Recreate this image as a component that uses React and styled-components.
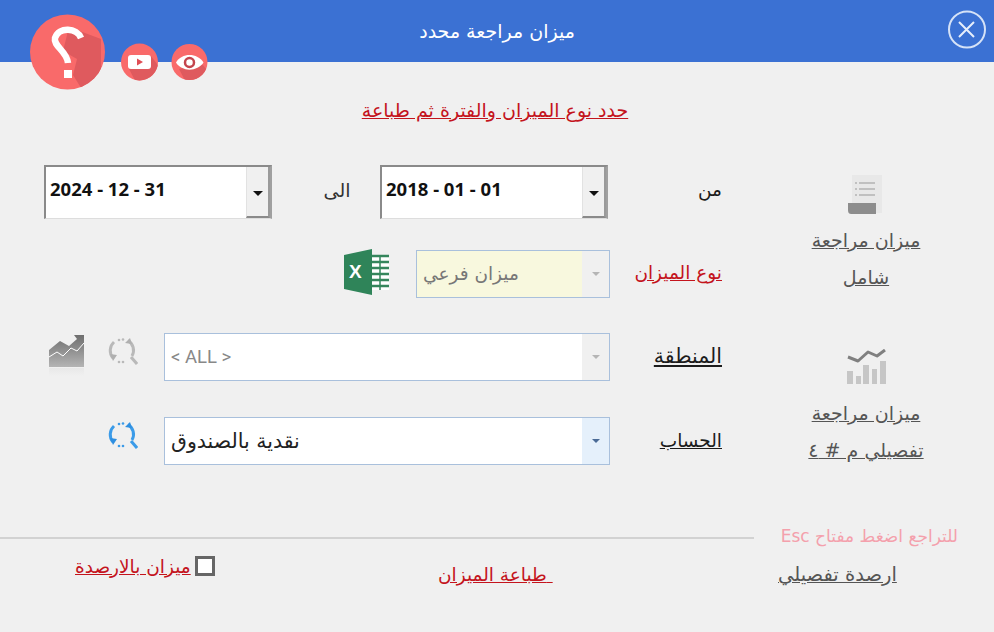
import React from "react";
import styled, { createGlobalStyle } from "styled-components";

const Global = createGlobalStyle`
  html, body { margin: 0; padding: 0; background: #f0f0f0; }
  body { font-family: "DejaVu Sans", "Noto Sans", sans-serif; }
  * { box-sizing: border-box; }
`;

const Page = styled.div`
  position: relative;
  width: 994px;
  height: 632px;
  overflow: hidden;
  background: #f0f0f0;
`;
const Header = styled.header`
  height: 62px;
  background: #3b71d3;
  display: flex;
  align-items: center;
  justify-content: center;
  color: #fff;
  font-size: 19px;
`;
const CloseButton = styled.svg`
  position: absolute;
  left: 947px;
  top: 10px;
`;
const Badges = styled.div`
  position: absolute;
  left: 29px;
  top: 13px;
`;
const Hint = styled.div`
  margin-top: 36px;
  height: 24px;
  line-height: 24px;
  text-align: center;
  color: #c4141d;
  font-size: 19px;
  text-decoration: underline;
  padding-right: 4px;
`;
const Content = styled.main`
  margin-top: 43px;
  display: flex;
  height: 300px;
`;
const Form = styled.div`
  width: 754px;
  display: flex;
  flex-direction: column;
`;
const Row = styled.div`
  display: flex;
  align-items: center;
  width: 722px;
  height: ${(p) => p.$h}px;
  margin-top: ${(p) => p.$top}px;
  padding-left: ${(p) => p.$left}px;
`;
const RowLabel = styled.div`
  margin-left: auto;
  margin-top: ${(p) => (p.$plain ? -6 : -2)}px;
  font-size: ${(p) => p.$size || 18.5}px;
  color: ${(p) => (p.$red ? "#c4141d" : "#1c1c1c")};
  text-decoration: ${(p) => (p.$plain ? "none" : "underline")};
`;
const DatePicker = styled.div`
  width: 228px;
  height: 54px;
  display: flex;
  background: #fff;
  border: 2px solid #8a8a8a;
  border-right-color: #a0a0a0;
  border-bottom: 1px solid #ddd;
  box-shadow: inset 0 0 0 1px #fff;
`;
const DateValue = styled.div`
  flex: 1;
  padding: 10px 0 0 4px;
  font-family: "Noto Sans", sans-serif;
  font-weight: 700;
  font-size: 18.5px;
  line-height: 24px;
  color: #111;
`;
const DateArrow = styled.div`
  width: 24px;
  background: #f0f0f0;
  border-left: 1px solid #e2e2e2;
  border-right: 2px solid #9a9a9a;
  border-bottom: 2px solid #8a8a8a;
  display: flex;
  align-items: center;
  justify-content: center;
  &::after {
    content: "";
    margin-top: 4px;
    border-left: 5px solid transparent;
    border-right: 5px solid transparent;
    border-top: 5px solid #111;
  }
`;
const RangeWord = styled.div`
  width: 108px;
  padding-left: 22px;
  margin-top: -4px;
  text-align: center;
  font-size: 19px;
  color: #333;
`;
const Select = styled.div`
  width: ${(p) => p.$w}px;
  height: 48px;
  display: flex;
  background: ${(p) => p.$bg || "#fff"};
  border: 1.5px solid #a9c0dc;
`;
const SelectValue = styled.div`
  flex: 1;
  padding-left: 6px;
  display: flex;
  align-items: center;
  direction: ${(p) => (p.$ltr ? "ltr" : "rtl")};
  justify-content: ${(p) => (p.$ltr ? "flex-start" : "flex-end")};
  font-size: ${(p) => p.$size}px;
  font-family: ${(p) => (p.$ltr ? '"Roboto", sans-serif' : "inherit")};
  color: ${(p) => p.$color};
`;
const SelectArrow = styled.div`
  width: 27px;
  background: ${(p) => (p.$active ? "#e5f0fb" : "#f0f0f0")};
  display: flex;
  align-items: center;
  justify-content: center;
  &::after {
    content: "";
    border-left: 4px solid transparent;
    border-right: 4px solid transparent;
    border-top: 4px solid ${(p) => (p.$active ? "#4a6a96" : "#b5b5b5")};
  }
`;
const Gap = styled.div`
  width: ${(p) => p.$w}px;
  flex: none;
`;
const Sidebar = styled.nav`
  width: 224px;
  padding-top: 10px;
  display: flex;
  flex-direction: column;
  align-items: center;
`;
const SideItem = styled.a`
  display: flex;
  flex-direction: column;
  align-items: center;
  margin-top: ${(p) => p.$top}px;
  color: #555;
  font-size: 19px;
  line-height: 37px;
  text-align: center;
  text-decoration: underline;
`;
const SideIcon = styled.svg`
  display: block;
  margin-bottom: ${(p) => p.$bottom}px;
`;
const Separator = styled.div`
  display: flex;
  align-items: center;
  margin-top: 60px;
  height: 26px;
`;
const Rule = styled.hr`
  width: 754px;
  height: 2px;
  margin: 0;
  border: 0;
  background: #d2d2d2;
`;
const EscNote = styled.div`
  width: 204px;
  margin-top: -4px;
  direction: rtl;
  text-align: right;
  font-size: 17px;
  white-space: nowrap;
  color: #f4a0ac;
`;
const Footer = styled.footer`
  display: flex;
  align-items: flex-start;
  margin-top: 3px;
  padding-left: 75px;
`;
const CheckGroup = styled.label`
  display: flex;
  align-items: center;
  gap: 4px;
  width: 363px;
  height: 24px;
  color: #c4141d;
  font-size: 18.5px;
  span { text-decoration: underline; }
`;
const CheckBox = styled.i`
  width: 20px;
  height: 20px;
  background: #fff;
  border: 3px solid #666;
`;
const PrintLink = styled.a`
  width: 340px;
  margin-top: 10px;
  color: #c4141d;
  font-size: 18.5px;
  white-space: pre;
  text-decoration: underline;
`;
const DetailLink = styled.a`
  margin-top: 9px;
  color: #555;
  font-size: 19.5px;
  white-space: nowrap;
  text-decoration: underline;
`;
const Art = styled.svg`
  display: block;
  flex: none;
`;
const SyncArt = styled(Art)`
  margin-bottom: 10px;
`;
const ExcelArt = styled(Art)`
  margin-bottom: 3px;
`;

const SearchSync = ({ c, a }) => (
  <SyncArt width="30" height="30" viewBox="0 0 30 30">
    <path d="M6 5 A11.500 11.500 0 0 0 5 21" fill="none" stroke={c} strokeWidth="3" />
    <path d="M20 3.500 A11.500 11.500 0 0 1 24 19" fill="none" stroke={c} strokeWidth="3" />
    <path d="M23 20l6 7" stroke={c} strokeWidth="3" />
    <path d="M2 17l7 1-4 6z M24 7l-7-1 5-5z" fill={a} />
    <circle cx="11" cy="3" r="1.300" fill={c} /><circle cx="15" cy="2.500" r="1.300" fill={c} />
    <circle cx="11" cy="25" r="1.300" fill={c} /><circle cx="15" cy="25" r="1.300" fill={c} />
  </SyncArt>
);

export default function App() {
  return (
    <Page>
      <Global />
      <Header>ميزان مراجعة محدد</Header>
      <CloseButton width="40" height="40" viewBox="0 0 40 40">
        <circle cx="20" cy="19.500" r="18" fill="none" stroke="#d5e2f7" strokeWidth="2" />
        <path d="M12 12l15 15M27 12l-15 15" stroke="#e6eefb" strokeWidth="2" />
      </CloseButton>
      <Badges>
        <Art width="182" height="80" viewBox="0 0 182 80">
          <defs>
            <clipPath id="q"><circle cx="38.500" cy="39" r="37.500" /></clipPath>
            <clipPath id="y"><circle cx="110.500" cy="49" r="18.500" /></clipPath>
            <clipPath id="e"><circle cx="160.500" cy="49" r="18" /></clipPath>
          </defs>
          <circle cx="38.500" cy="39" r="37.500" fill="#f96a6a" />
          <path d="M40 14 L72 26 V62 L54 78 L44 62 L48 46 L34 38 Z" fill="#df5a5e" clipPath="url(#q)" />
          <path d="M52 25 C48 15 30 13 26 25 C24 33 38 38 39 50" fill="none" stroke="#fff" strokeWidth="6.500" />
          <rect x="35" y="57" width="8" height="8" fill="#fff" />
          <circle cx="110.500" cy="49" r="18.500" fill="#f96a6a" />
          <path d="M100 56 L122 43 L135 60 L110 75 Z" fill="#df5a5e" clipPath="url(#y)" />
          <rect x="99" y="42" width="23" height="14" rx="3" fill="#fff" />
          <path d="M108 45.500l6 3.500-6 3.500z" fill="#e04e55" />
          <circle cx="160.500" cy="49" r="18" fill="#f96a6a" />
          <path d="M150 56 L172 50 L185 65 L160 75 Z" fill="#df5a5e" clipPath="url(#e)" />
          <path d="M147 49.500 C152.500 39.500 168.500 39.500 174.500 49.500 C168.500 59 152.500 59 147 49.500 Z" fill="#fff" />
          <circle cx="160.500" cy="49.500" r="4.500" fill="none" stroke="#c4454d" strokeWidth="2.500" />
        </Art>
      </Badges>

      <Hint>حدد نوع الميزان والفترة ثم طباعة</Hint>

      <Content>
        <Form>
          <Row $h={54} $top={0} $left={44}>
            <DatePicker><DateValue>2024 - 12 - 31</DateValue><DateArrow /></DatePicker>
            <RangeWord>الى</RangeWord>
            <DatePicker><DateValue>2018 - 01 - 01</DateValue><DateArrow /></DatePicker>
            <RowLabel $plain>من</RowLabel>
          </Row>
          <Row $h={47} $top={31} $left={344}>
            <ExcelArt width="46" height="46" viewBox="0 0 46 46">
              <path d="M0 6 L28 0 V46 L0 40 Z" fill="#2f8459" />
              <path d="M28 6 H45 V41 H28 Z" fill="#fff" />
              <path d="M28 7h17M28 13h17M28 19h17M28 25h17M28 31h17M28 37h17" fill="none" stroke="#35865c" strokeWidth="2.500" />
              <path d="M36 6v35" fill="none" stroke="#35865c" strokeWidth="1.500" />
              <text x="5" y="29" fill="#fff" fontFamily="Liberation Sans" fontWeight="700" fontSize="19">X</text>
            </ExcelArt>
            <Gap $w={26} />
            <Select $w={194} $bg="#f8f8de">
              <SelectValue $color="#777" $size={18.500}>ميزان فرعي</SelectValue>
              <SelectArrow />
            </Select>
            <RowLabel $red>نوع الميزان</RowLabel>
          </Row>
          <Row $h={48} $top={36} $left={49}>
            <Art width="36" height="46" viewBox="0 0 36 46">
              <defs>
                <linearGradient id="g" x1="0" y1="0" x2="0" y2="1"><stop offset="0" stopColor="#6e6e6e" /><stop offset="1" stopColor="#b4b4b4" /></linearGradient>
                <linearGradient id="f" x1="0" y1="0" x2="0" y2="1"><stop offset="0" stopColor="#e8e8e8" /><stop offset="1" stopColor="#f0f0f0" /></linearGradient>
              </defs>
              <path d="M0 16 L11 7 L20 12 L28 5 L25 1 H35 V33 H0 Z" fill="url(#g)" />
              <path d="M0 23 L8 18 L14 22 L22 14 L28 17 L35 9" fill="none" stroke="#fff" strokeWidth="1" />
              <rect x="0" y="34" width="35" height="8" fill="url(#f)" />
            </Art>
            <Gap $w={23} />
            <SearchSync c="#b9b9b9" a="#b0b0b0" />
            <Gap $w={26} />
            <Select $w={446}>
              <SelectValue $ltr $color="#888" $size={18.500}>{"< ALL >"}</SelectValue>
              <SelectArrow />
            </Select>
            <RowLabel $size={20.500}>المنطقة</RowLabel>
          </Row>
          <Row $h={48} $top={36} $left={108}>
            <SearchSync c="#3b9be8" a="#2f8fe0" />
            <Gap $w={26} />
            <Select $w={446}>
              <SelectValue $color="#222" $size={20.500}>نقدية بالصندوق</SelectValue>
              <SelectArrow $active />
            </Select>
            <RowLabel>الحساب</RowLabel>
          </Row>
        </Form>
        <Sidebar>
          <SideItem $top={0}>
            <SideIcon $bottom={7} width="36" height="40" viewBox="0 0 36 40">
              <rect x="4" y="0" width="30" height="38" fill="#e8e8e8" />
              <path d="M7 8h2M7 14h2M7 20h2M11 8h16M11 14h16M11 20h16" stroke="#c0c0c0" strokeWidth="2" />
              <path d="M0 28 H28 V39 H3 C0 39 0 36 0 34 Z" fill="#8d8d8d" />
            </SideIcon>
            <span>ميزان مراجعة</span>
            <span>شامل</span>
          </SideItem>
          <SideItem $top={53}>
            <SideIcon $bottom={8} width="40" height="38" viewBox="0 0 40 38">
              <path d="M2 8 L12 12 L22 3 L31 7 L39 1" fill="none" stroke="#808080" strokeWidth="3" strokeLinejoin="round" />
              <path d="M1 22h6v13H1z M10 27h5v8h-5z M17 16h6v19h-6z M26 20h5v15h-5z M34 12h6v23h-6z" fill="#c6c6c6" />
            </SideIcon>
            <span>ميزان مراجعة</span>
            <span>تفصيلي م # ٤</span>
          </SideItem>
        </Sidebar>
      </Content>

      <Separator>
        <Rule />
        <EscNote>للتراجع اضغط مفتاح Esc</EscNote>
      </Separator>
      <Footer>
        <CheckGroup><span>ميزان بالارصدة</span><CheckBox /></CheckGroup>
        <PrintLink>{"طباعة الميزان "}</PrintLink>
        <DetailLink>ارصدة تفصيلي</DetailLink>
      </Footer>
    </Page>
  );
}
